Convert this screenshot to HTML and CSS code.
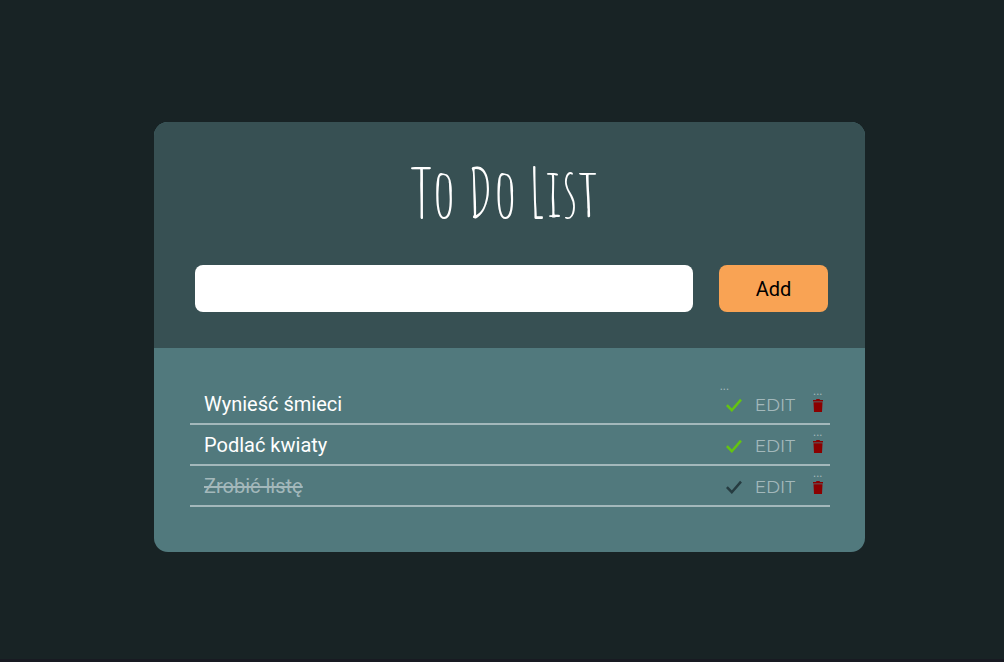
FILE: index.html
```html
<!DOCTYPE html>
<html lang="pl">
<head>
<meta charset="utf-8">
<meta name="viewport" content="width=device-width, initial-scale=1">
<title>To Do List</title>
<link rel="stylesheet" href="styles.css">
</head>
<body>
<svg class="sprite" aria-hidden="true">
  <symbol id="check" viewBox="0 0 16 14"><path d="M.9 7.2 5.8 12.2 15 1.6" fill="none" stroke="currentColor" stroke-width="2.5"/></symbol>
  <symbol id="trash" viewBox="0 0 10 13"><path d="M0 .9H2.8L3.6 0H6.4L7.2 .9H10V2.5H0ZM.5 3.2H9.5L9 13H1Z" fill="currentColor"/></symbol>
</svg>
<main class="card">
  <header class="card-head">
    <h1 class="title">To Do List</h1>
    <form class="form">
      <input class="field" type="text" aria-label="Task">
      <button class="add" type="button">Add</button>
    </form>
  </header>
  <ul class="list">
    <li class="item">
      <span class="task">Wynieść śmieci</span>
      <button class="done" type="button" aria-label="Done"><span class="dots dots-left">...</span><svg class="check"><use href="#check"/></svg></button>
      <button class="edit" type="button">EDIT</button>
      <button class="remove" type="button" aria-label="Delete"><span class="dots">...</span><svg class="trash"><use href="#trash"/></svg></button>
    </li>
    <li class="item">
      <span class="task">Podlać kwiaty</span>
      <button class="done" type="button" aria-label="Done"><svg class="check"><use href="#check"/></svg></button>
      <button class="edit" type="button">EDIT</button>
      <button class="remove" type="button" aria-label="Delete"><span class="dots">...</span><svg class="trash"><use href="#trash"/></svg></button>
    </li>
    <li class="item completed">
      <span class="task">Zrobić listę</span>
      <button class="done" type="button" aria-label="Done"><svg class="check"><use href="#check"/></svg></button>
      <button class="edit" type="button">EDIT</button>
      <button class="remove" type="button" aria-label="Delete"><span class="dots">...</span><svg class="trash"><use href="#trash"/></svg></button>
    </li>
  </ul>
</main>
</body>
</html>
```
FILE: styles.css
```css
* { box-sizing: border-box; }
body {
  margin: 0;
  min-height: 100vh;
  display: flex;
  align-items: center;
  justify-content: center;
  padding: 15px 0 0 15px;
  border-bottom: 3px solid #181a22;
  background: #182325;
  font-family: Roboto, "Liberation Sans", sans-serif;
  color: #fff;
}
button { border: 0; padding: 0; background: none; font: inherit; cursor: pointer; }
.sprite { position: absolute; width: 0; height: 0; }
.card {
  width: 100%;
  max-width: 711px;
  border-radius: 14px;
  overflow: hidden;
  background: #51797d;
}
.card-head { padding: 28px 37px 36px 41px; background: #375053; }
.title {
  margin: 0;
  padding-right: 14px;
  font: 400 68px/84px "Amatic SC", "Open Sans Condensed", Lato, sans-serif;
  text-align: center;
}
.form { display: flex; gap: 26px; margin-top: 31px; }
.field {
  flex: 1;
  min-width: 0;
  height: 47px;
  padding: 0 12px;
  border: 0;
  border-radius: 8px;
  background: #fff;
  font: 20px Roboto, sans-serif;
}
.add {
  width: 109px;
  height: 47px;
  border-radius: 8px;
  background: #f9a354;
  color: #000;
  font-size: 20px;
}
.list { margin: 0; padding: 36px 35px 45px 36px; list-style: none; }
.item {
  display: flex;
  align-items: center;
  height: 41px;
  padding: 0 7px 0 14px;
  border-bottom: 2px solid #a3b8bb;
}
.task { flex: 1; font-size: 20px; line-height: 24px; }
.done { position: relative; display: flex; width: 16px; height: 14px; margin-top: 2px; color: #64c411; }
.check { width: 16px; height: 14px; }
.edit {
  margin: 2px 18px 0 13px;
  color: #a3b8bb;
  font: 400 17px/24px Montserrat, Inter, sans-serif;
}
.remove { position: relative; display: flex; width: 10px; height: 13px; margin-top: 3px; color: #8b0000; }
.trash { width: 10px; height: 13px; }
.dots {
  position: absolute;
  left: 0;
  bottom: 17px;
  color: #a3b8bb;
  font-size: 12px;
  line-height: 8px;
}
.dots-left { left: -6px; bottom: 22px; }
.completed .task { color: #a3b8bb; text-decoration: line-through; }
.completed .done { color: #263c41; }
```
